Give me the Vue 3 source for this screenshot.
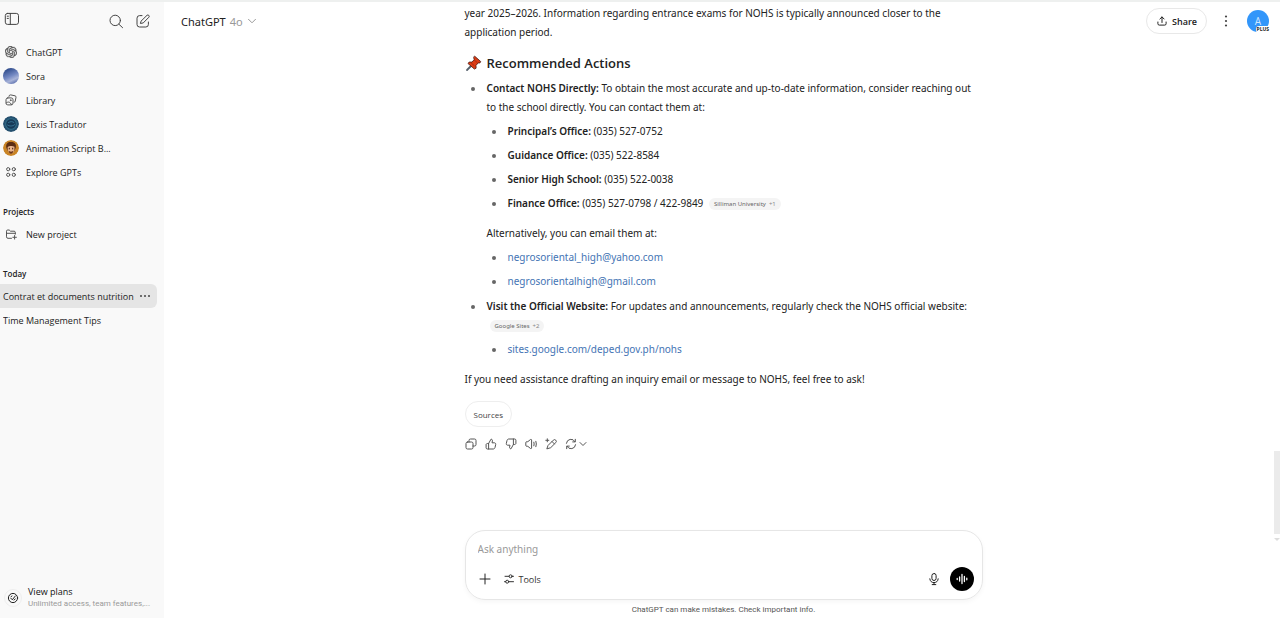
<script setup>
import { ref } from 'vue'

const prompt = ref('')

const phones = [
  { label: 'Principal’s Office', value: '(035) 527-0752' },
  { label: 'Guidance Office', value: '(035) 522-8584' },
  { label: 'Senior High School', value: '(035) 522-0038' },
  { label: 'Finance Office', value: '(035) 527-0798 / 422-9849', cite: 'Silliman University', more: '+1' },
]
const emails = ['negrosoriental_high@yahoo.com', 'negrosorientalhigh@gmail.com']
</script>

<template>
  <div class="app">
    <aside class="sidebar">
      <div class="side-top">
        <button class="icon-btn toggle" aria-label="Close sidebar">
          <svg width="16" height="16" viewBox="0 0 16 16"><rect x="1.3" y="2.4" width="13.2" height="11" rx="2.2" /><path d="M6.3 2.4v11M3.2 5.2h1.2M3.2 7.4h1.2" /></svg>
        </button>
        <span class="spacer"></span>
        <button class="icon-btn" aria-label="Search chats">
          <svg width="16" height="16" viewBox="0 0 16 16"><circle cx="7.2" cy="7.4" r="5.2" /><path d="M11 11.3l3.6 3.4" /></svg>
        </button>
        <button class="icon-btn" aria-label="New chat">
          <svg width="16" height="16" viewBox="0 0 16 16"><path d="M7 2.6H4.6a2.6 2.6 0 0 0-2.6 2.6v6.2A2.6 2.6 0 0 0 4.6 14h6.2a2.6 2.6 0 0 0 2.6-2.6V9" /><path d="M6.3 7.9l5.7-5.6a1.35 1.35 0 0 1 1.9 1.9L8.3 9.9l-2.5.5z" /></svg>
        </button>
      </div>

      <nav class="nav">
        <a href="#" class="nav-item">
          <svg class="solid glyph logo" width="12" height="12" viewBox="0 0 24 24"><path d="M22.2819 9.8211a5.9847 5.9847 0 0 0-.5157-4.9108 6.0462 6.0462 0 0 0-6.5098-2.9A6.0651 6.0651 0 0 0 4.9807 4.1818a5.9847 5.9847 0 0 0-3.9977 2.9 6.0462 6.0462 0 0 0 .7427 7.0966 5.98 5.98 0 0 0 .511 4.9107 6.051 6.051 0 0 0 6.5146 2.9001A5.9847 5.9847 0 0 0 13.2599 24a6.0557 6.0557 0 0 0 5.7718-4.2058 5.9894 5.9894 0 0 0 3.9977-2.9001 6.0557 6.0557 0 0 0-.7475-7.0729zm-9.022 12.6081a4.4755 4.4755 0 0 1-2.8764-1.0408l.1419-.0804 4.7783-2.7582a.7948.7948 0 0 0 .3927-.6813v-6.7369l2.02 1.1686a.071.071 0 0 1 .038.052v5.5826a4.504 4.504 0 0 1-4.4945 4.4944zm-9.6607-4.1254a4.4708 4.4708 0 0 1-.5346-3.0137l.142.0852 4.783 2.7582a.7712.7712 0 0 0 .7806 0l5.8428-3.3685v2.3324a.0804.0804 0 0 1-.0332.0615L9.74 19.9502a4.4992 4.4992 0 0 1-6.1408-1.6464zM2.3408 7.8956a4.485 4.485 0 0 1 2.3655-1.9728V11.6a.7664.7664 0 0 0 .3879.6765l5.8144 3.3543-2.0201 1.1685a.0757.0757 0 0 1-.071 0l-4.8303-2.7865A4.504 4.504 0 0 1 2.3408 7.872zm16.5963 3.8558L13.1038 8.364 15.1192 7.2a.0757.0757 0 0 1 .071 0l4.8303 2.7913a4.4944 4.4944 0 0 1-.6765 8.1042v-5.6772a.79.79 0 0 0-.407-.667zm2.0107-3.0231l-.142-.0852-4.7735-2.7818a.7759.7759 0 0 0-.7854 0L9.409 9.2297V6.8974a.0662.0662 0 0 1 .0284-.0615l4.8303-2.7866a4.4992 4.4992 0 0 1 6.6802 4.66zM8.3065 12.863l-2.02-1.1638a.0804.0804 0 0 1-.038-.0567V6.0742a4.4992 4.4992 0 0 1 7.3757-3.4537l-.142.0805L8.704 5.459a.7948.7948 0 0 0-.3927.6813zm1.0976-2.3654l2.602-1.4998 2.6069 1.4998v2.9994l-2.5974 1.4997-2.6067-1.4997Z" /></svg>
          <span>ChatGPT</span>
        </a>
        <a href="#" class="nav-item"><span class="avatar sora"></span><span>Sora</span></a>
        <a href="#" class="nav-item">
          <svg class="glyph" width="12" height="12" viewBox="0 0 12 12"><path d="M4 2.4l.2-.6a1.3 1.3 0 0 1 1.5-.9l4.3.9a1.3 1.3 0 0 1 1 1.5L10.2 7.3a1.3 1.3 0 0 1-1 1" /><rect x="1" y="3.9" width="7" height="7" rx="1.8" /><path d="M1.2 9c2-1.8 4-1.2 5.3 1.7" /><circle cx="5.7" cy="6.2" r=".4" /></svg>
          <span>Library</span>
        </a>
        <a href="#" class="nav-item">
          <svg class="avatar" viewBox="0 0 16 16"><circle cx="8" cy="8" r="8" fill="#25506f" stroke="none" /><circle cx="8" cy="8" r="5.4" fill="#173a58" stroke="#2f6a86" stroke-width="1.2" /><path d="M4.5 9c2 1.5 5 1.5 7.2-.4M5.500 6.500c2-1.2 4-1.2 5.500 0" stroke="#3f7fa0" stroke-width=".8" /></svg>
          <span>Lexis Tradutor</span>
        </a>
        <a href="#" class="nav-item">
          <svg class="avatar" viewBox="0 0 16 16"><circle cx="8" cy="8" r="8" fill="#c98426" stroke="none" /><path d="M3.4 8C2.5 3.500 5 1.8 8 2c3.500-.2 5.800 2 4.700 6l-1.500 3H5z" fill="#5b2d12" stroke="none" /><path d="M4.700 7c1.500-1 4.800-1.400 6.700-.2.4 3.500-.6 6.600-3.400 6.700-2.500-.2-3.600-3.200-3.300-6.500z" fill="#e9b58d" stroke="none" /><path d="M5.500 10.500c1 1.500 4 1.500 5 0-.2 2-1.200 3.200-2.500 3.200s-2.300-1.200-2.500-3.200z" fill="#6b3518" stroke="none" /><path d="M6.300 8.200v.8M9.700 8.200v.8" stroke="#3b1c0c" /></svg>
          <span>Animation Script B...</span>
        </a>
        <a href="#" class="nav-item">
          <svg class="glyph" width="12" height="12" viewBox="0 0 12 12"><circle cx="3.2" cy="3.2" r="1.6" /><circle cx="8.800" cy="3.2" r="1.6" /><circle cx="3.2" cy="8.800" r="1.6" /><circle cx="8.800" cy="8.800" r="1.6" /></svg>
          <span>Explore GPTs</span>
        </a>
      </nav>

      <h2 class="side-title">Projects</h2>
      <a href="#" class="nav-item">
        <svg class="glyph" width="12" height="12" viewBox="0 0 12 12"><path d="M6.500 10.300H3a1.500 1.500 0 0 1-1.500-1.500V3.200a1.200 1.200 0 0 1 1.200-1.200h1.500l1.300 1.200h3.600a1.200 1.200 0 0 1 1.200 1.200v1.800M1.500 5.300h8.800M9.600 7.500v3.600M7.800 9.300h3.600" /></svg>
        <span>New project</span>
      </a>

      <h2 class="side-title">Today</h2>
      <div class="chat-row active">
        <a href="#" class="chat-link">Contrat et documents nutrition</a>
        <button class="icon-btn" aria-label="Chat options">
          <svg class="solid" width="12" height="12" viewBox="0 0 12 12"><circle cx="2" cy="6" r="1" /><circle cx="6" cy="6" r="1" /><circle cx="10" cy="6" r="1" /></svg>
        </button>
      </div>
      <div class="chat-row"><a href="#" class="chat-link">Time Management Tips</a></div>

      <a href="#" class="plans">
        <span class="plans-icon">
          <svg width="12" height="12" viewBox="0 0 12 12"><circle cx="6" cy="6" r="4.600" /><path d="M3.800 6.200l1.500 1.600 3-3.800M4 4.700l1-.7M7 8l1.200-1" /></svg>
        </span>
        <span class="plans-text"><b>View plans</b><small>Unlimited access, team features,...</small></span>
      </a>
    </aside>

    <main class="main">
      <header class="header">
        <button class="model">ChatGPT <span>4o</span>
          <svg width="10" height="10" viewBox="0 0 10 10"><path d="M1.500 3.300L5 6.800l3.500-3.500" /></svg>
        </button>
        <span class="spacer"></span>
        <button class="share">
          <svg width="12" height="12" viewBox="0 0 12 12"><path d="M6 7.500V2M3.900 4L6 1.900 8.100 4M1.900 7v1.700a1.400 1.400 0 0 0 1.400 1.400h5.400a1.400 1.400 0 0 0 1.400-1.400V7" /></svg>
          Share
        </button>
        <button class="icon-btn more" aria-label="Conversation options">
          <svg class="solid" width="14" height="14" viewBox="0 0 14 14"><circle cx="7" cy="2.500" r="1.100" /><circle cx="7" cy="7" r="1.100" /><circle cx="7" cy="11.500" r="1.100" /></svg>
        </button>
        <button class="profile" aria-label="Profile">A<span class="plus">PLUS</span></button>
      </header>

      <article class="thread">
        <p>year 2025–2026. Information regarding entrance exams for NOHS is typically announced closer to the application period.</p>
        <h3>
          <svg class="pin" width="17" height="17" viewBox="0 0 17 17"><path d="M6.500 10.500L2 15" stroke="#55606b" stroke-width="1.800" /><path d="M9.800 1.300l5.900 5.200-.8 1.500-1.700-.1-2.200 2.500.1 2.800-1.700.9-6.400-5.600 1.200-1.500 2.800.1 2.200-2.500-.5-1.800z" fill="#dd3a12" stroke="#4a1c14" stroke-width=".8" /><path d="M9.300 5l2.800 2.500M6.500 8.200l2.500 2.200" stroke="#8e2110" stroke-width=".7" /></svg>
          Recommended Actions
        </h3>
        <ul class="outer">
          <li>
            <strong>Contact NOHS Directly:</strong> To obtain the most accurate and up-to-date information, consider reaching out to the school directly. You can contact them at:
            <ul>
              <li v-for="p in phones" :key="p.label">
                <strong>{{ p.label }}:</strong> {{ p.value }}
                <a v-if="p.cite" href="#" class="cite">{{ p.cite }}<span>{{ p.more }}</span></a>
              </li>
            </ul>
            <p class="inner">Alternatively, you can email them at:</p>
            <ul>
              <li v-for="e in emails" :key="e"><a href="#" class="link">{{ e }}</a></li>
            </ul>
          </li>
          <li>
            <strong>Visit the Official Website:</strong> For updates and announcements, regularly check the NOHS official website: <a href="#" class="cite">Google Sites<span>+2</span></a>
            <ul>
              <li><a href="#" class="link">sites.google.com/deped.gov.ph/nohs</a></li>
            </ul>
          </li>
        </ul>
        <p class="closing">If you need assistance drafting an inquiry email or message to NOHS, feel free to ask!</p>
        <button class="sources">Sources</button>
        <div class="actions">
          <button class="icon-btn" aria-label="Copy"><svg width="12" height="12" viewBox="0 0 12 12"><rect x="1" y="4" width="7" height="7" rx="1.500" /><path d="M4 4V2.500A1.500 1.500 0 0 1 5.500 1h4A1.500 1.500 0 0 1 11 2.500v4A1.500 1.500 0 0 1 9.500 8H8" /></svg></button>
          <button class="icon-btn" aria-label="Good response"><svg width="12" height="12" viewBox="0 0 12 12"><path d="M3.600 5.500L6 1.200c1.100 0 1.600.8 1.400 1.800L7 4.800h2.300c1 0 1.600.8 1.400 1.700l-.7 3c-.2.9-.9 1.500-1.800 1.500H2.300c-.7 0-1.200-.5-1.200-1.200V6.700c0-.7.5-1.200 1.200-1.200zM3.600 5.500V11" /></svg></button>
          <button class="icon-btn" aria-label="Bad response"><svg width="12" height="12" viewBox="0 0 12 12"><path d="M8.400 6.500L6 10.800c-1.100 0-1.600-.8-1.400-1.800L5 7.200H2.700c-1 0-1.600-.8-1.400-1.700l.7-3C2.200 1.600 2.900 1 3.800 1h5.900c.7 0 1.200.5 1.200 1.200v3.100c0 .7-.5 1.200-1.200 1.200zM8.400 6.500V1" /></svg></button>
          <button class="icon-btn" aria-label="Read aloud"><svg width="12" height="12" viewBox="0 0 12 12"><path d="M.8 4.500c0-.5.3-.8.8-.8h1.200L5.500 1.500c.5-.4 1.100-.1 1.100.5v8c0 .6-.6.9-1.100.5L2.800 8.300H1.600c-.5 0-.8-.3-.8-.8zM8.900 4.200q.6 1.800 0 3.600M10.900 3.300q1 2.700 0 5.400" /></svg></button>
          <button class="icon-btn" aria-label="Edit in canvas"><svg width="12" height="12" viewBox="0 0 12 12"><path d="M3.300 7.200L8.300 2.200a1.700 1.700 0 0 1 2.500 2.400L5.700 9.700 2.200 10.800zM7 3.500l2.400 2.400M2.300.8v3M.8 2.300h3" /></svg></button>
          <button class="icon-btn regen" aria-label="Regenerate"><svg width="12" height="12" viewBox="0 0 12 12"><path d="M1.400 5.300A4.600 4.600 0 0 1 10 3.700M10.300 1.300v2.600H7.700M10.600 6.700A4.600 4.600 0 0 1 2 8.300M1.700 10.700V8.100h2.600" /></svg><svg width="8" height="8" viewBox="0 0 8 8"><path d="M1 2.500l3 3 3-3" /></svg></button>
        </div>
      </article>

      <form class="composer" @submit.prevent>
        <input v-model="prompt" type="text" aria-label="Message" placeholder="Ask anything" />
        <div class="tools">
          <button type="button" class="icon-btn" aria-label="Add files"><svg width="14" height="14" viewBox="0 0 14 14"><path d="M7 2v10M2 7h10" /></svg></button>
          <button type="button" class="tool-btn"><svg width="12" height="12" viewBox="0 0 12 12"><path d="M2 3.300h4M9.200 3.300H10.500M1.500 8.700h1.200M5.800 8.700H10.500" /><circle cx="7.600" cy="3.300" r="1.500" /><circle cx="4.200" cy="8.700" r="1.500" /></svg>Tools</button>
          <span class="spacer"></span>
          <button type="button" class="icon-btn" aria-label="Dictate"><svg width="14" height="14" viewBox="0 0 14 14"><rect x="4.900" y="1.500" width="4.200" height="7" rx="2.100" /><path d="M2.800 6.800C3 9.300 4.700 10.600 7 10.600s4-1.300 4.200-3.800M7 10.600v2M5.200 12.600h3.600" /></svg></button>
          <button type="button" class="voice" aria-label="Voice mode"><svg width="14" height="14" viewBox="0 0 14 14"><path d="M2.200 6.500v1M4.600 5v4M7 2.500v9M9.400 4.500v5M11.800 6.200v1.600" stroke-width="1.300" /></svg></button>
        </div>
      </form>
      <footer class="footnote">ChatGPT can make mistakes. Check important info.</footer>

      <div class="scrollbar" aria-hidden="true"><span class="thumb"></span><span class="arrow"></span></div>
    </main>
  </div>
</template>

<style>
body { margin: 0; background: #fff; overflow: hidden; }
</style>

<style scoped>
.app {
  display: flex;
  height: 100vh;
  box-sizing: border-box;
  border-top: 2px solid #eef0ef;
  font-family: "Open Sans", "Noto Sans", sans-serif;
  font-size: 9px;
  color: #222;
}
button { border: 0; margin: 0; padding: 0; background: none; color: inherit; font: inherit; cursor: pointer; }
a { color: inherit; text-decoration: none; }
svg { fill: none; stroke: currentColor; stroke-width: 1; stroke-linecap: round; stroke-linejoin: round; flex: none; display: block; }
svg.solid { fill: currentColor; stroke: none; }
svg.logo { stroke: currentColor; stroke-width: .6; }
.spacer { flex: 1; }
.icon-btn { display: flex; align-items: center; justify-content: center; color: #444; }

.sidebar { width: 164px; flex: none; display: flex; flex-direction: column; background: #f9f9f9; }
.side-top { display: flex; align-items: center; gap: 11px; height: 38px; padding: 0 13px 0 4px; }
.side-top .toggle { margin-bottom: 4px; }
.nav-item { display: flex; align-items: center; gap: 7px; height: 24px; padding-left: 3px; white-space: nowrap; }
.nav-item .glyph { margin: 0 2px; color: #555; }
.avatar { width: 16px; height: 16px; border-radius: 50%; }
.sora { background: linear-gradient(155deg, #34508f 15%, #7489c3 50%, #a9b4d8 70%, #5b6fae 90%); }
.side-title { margin: 20px 0 2px; padding-left: 3px; height: 16px; line-height: 16px; font-size: 8px; font-weight: 600; }
.chat-row { display: flex; align-items: center; height: 24px; margin-right: 7px; padding: 0 6px 0 3px; border-radius: 0 6px 6px 0; }
.chat-row.active { background: #e5e5e5; }
.chat-link { flex: 1; min-width: 0; overflow: hidden; white-space: nowrap; }
.plans { display: flex; align-items: center; gap: 6px; margin-top: auto; padding: 0 8px 8px 4px; }
.plans-icon { display: flex; align-items: center; justify-content: center; flex: none; width: 16px; height: 16px; border: 1px solid #eee; border-radius: 50%; }
.plans-text { display: flex; flex-direction: column; white-space: nowrap; line-height: 13px; }
.plans-text b { font-weight: 400; color: #111; }
.plans-text small { font-family: Roboto, "Open Sans", sans-serif; font-size: 8px; color: #999; line-height: 12px; }

.main { flex: 1; min-width: 0; position: relative; display: flex; flex-direction: column; padding-left: 3px; }
.header { position: absolute; top: 0; left: 0; right: 0; display: flex; align-items: center; height: 38px; padding: 0 11px 0 17px; }
.model { display: flex; align-items: center; gap: 4px; font-family: "Noto Sans", sans-serif; font-size: 11px; color: #222; }
.model span, .model svg { color: #999; }
.share { display: flex; align-items: center; gap: 4px; height: 26px; padding: 0 9px; border: 1px solid #e8e8e8; border-radius: 13px; font-weight: 600; }
.more { margin: 0 14px 0 12px; }
.profile { position: relative; width: 22px; height: 22px; border-radius: 50%; background: #3296fa; color: #cfe8ff; font-size: 10px; }
.plus { position: absolute; right: -1px; bottom: -1px; padding: 0 1px; border-radius: 3px; background: #fff; color: #222; font-size: 5px; line-height: 7px; font-weight: 700; }

.thread { width: 100%; max-width: 518px; margin: 0 auto; padding-top: 2px; flex: 1; min-height: 0; font-family: "Noto Sans", sans-serif; font-size: 10px; line-height: 19px; }
.thread p { margin: 0; }
.thread h3 { display: flex; align-items: center; gap: 5px; margin: 11px 0 6px; font-family: "Open Sans", "Noto Sans", sans-serif; font-size: 13px; line-height: 20px; font-weight: 600; }
.thread ul { list-style: none; margin: 0; padding: 0; }
.thread li { position: relative; }
.thread li::before { content: ""; position: absolute; left: -16px; top: 8px; width: 4px; height: 4px; border-radius: 50%; background: #666; }
.thread .outer { padding-left: 22px; }
.outer > li + li { margin-top: 6px; }
.thread li ul { padding-left: 21px; }
.thread li li { margin-top: 5px; }
.thread li .inner, .thread .closing { margin-top: 11px; }
strong { font-weight: 600; }
.link { color: #4474b4; }
.cite { display: inline-block; margin-left: 3px; padding: 0 5px; border-radius: 6px; background: #f4f4f4; color: #666; font-size: 6px; line-height: 12px; vertical-align: middle; }
.cite span { margin-left: 3px; color: #888; }
.sources { display: block; margin-top: 12px; height: 26px; padding: 0 8px; border: 1px solid #eee; border-radius: 13px; font-family: "Open Sans", "Noto Sans", sans-serif; font-size: 8px; color: #444; }
.actions { display: flex; gap: 8px; height: 12px; margin-top: 11px; }
.actions .icon-btn { color: #555; }
.regen { gap: 2px; }

.composer { width: 100%; max-width: 518px; height: 70px; margin: 0 auto; box-sizing: border-box; padding: 9px 8px 8px 12px; border: 1px solid #e6e6e6; border-radius: 20px; box-shadow: 0 2px 5px #0000000a; display: flex; flex-direction: column; justify-content: space-between; }
.composer input { border: 0; padding: 0; outline: 0; background: none; font-family: "Noto Sans", sans-serif; font-size: 10px; line-height: 18px; color: #222; }
.composer input::placeholder { color: #999; opacity: 1; }
.tools { display: flex; align-items: center; }
.tools .icon-btn { color: #222; }
.tool-btn { display: flex; align-items: center; gap: 4px; margin-left: 11px; color: #333; }
.voice { display: flex; align-items: center; justify-content: center; width: 24px; height: 24px; margin-left: 9px; border-radius: 50%; background: #000; color: #fff; }
.footnote { height: 18px; line-height: 20px; text-align: center; font-family: Roboto, "Open Sans", sans-serif; font-size: 8px; color: #555; }

.scrollbar { position: absolute; right: 0; bottom: 77px; display: flex; flex-direction: column; align-items: center; gap: 4px; }
.thumb { width: 6px; height: 83px; background: #ebebeb; }
.arrow { border: 3px solid transparent; border-top-color: #ddd; border-bottom: 0; }
</style>
